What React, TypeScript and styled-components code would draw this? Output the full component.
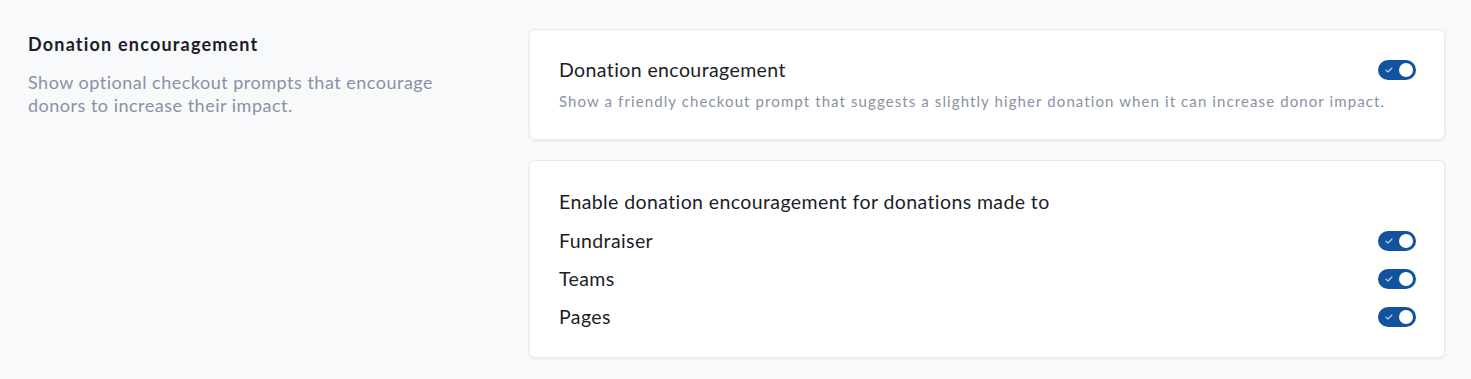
import React from "react";
import styled, { createGlobalStyle } from "styled-components";

const Global = createGlobalStyle`
  html, body { margin: 0; padding: 0; background: #f8f9fb; }
  body { font-family: Lato, "Open Sans", sans-serif; color: #1b1d29; }
`;

const Page = styled.div`
  display: grid;
  grid-template-columns: 469px 1fr;
  column-gap: 32px;
  padding: 29px 26px 20px 28px;
`;

const Intro = styled.div`
  display: flex;
  flex-direction: column;
  gap: 16px;
  padding-top: 4px;
`;

const IntroTitle = styled.h2`
  margin: 0;
  font-size: 18px;
  font-weight: 700;
  line-height: 22px;
  letter-spacing: 1.2px;
  color: #1b1d29;
`;

const IntroText = styled.p`
  margin: 0;
  font-size: 18px;
  line-height: 23px;
  letter-spacing: 0.5px;
  color: #8a91a4;
  max-width: 430px;
`;

const Cards = styled.div`
  display: flex;
  flex-direction: column;
  gap: 20px;
`;

const Card = styled.section<{ $pad: string }>`
  background: #fff;
  border: 1px solid #e8eaef;
  border-radius: 6px;
  box-shadow: 0 1px 3px rgba(20, 30, 60, 0.08);
  padding: ${(p) => p.$pad};
  display: flex;
  flex-direction: column;
`;

const Row = styled.div<{ $h?: number }>`
  display: flex;
  align-items: center;
  justify-content: space-between;
  height: ${(p) => p.$h ?? 38}px;
`;

const Label = styled.span`
  font-size: 19.5px;
  line-height: 24px;
  letter-spacing: 0.4px;
  color: #1b1d29;
`;

const Hint = styled.p`
  margin: 9px 0 0;
  font-size: 15px;
  line-height: 20px;
  color: #8a91a4;
  letter-spacing: 1.1px;
`;

const Track = styled.button`
  position: relative;
  width: 38px;
  height: 20px;
  border-radius: 10px;
  border: none;
  padding: 0;
  background: #13529d;
  cursor: pointer;
  flex-shrink: 0;
`;

const Knob = styled.span`
  position: absolute;
  top: 3px;
  right: 3px;
  width: 14px;
  height: 14px;
  border-radius: 50%;
  background: #fff;
`;

const Check = styled.svg`
  position: absolute;
  left: 7px;
  top: 7px;
`;

const Toggle = () => (
  <Track type="button" aria-pressed="true">
    <Check width="8" height="6" viewBox="0 0 8 6">
      <path d="M0.9 3.1 L2.9 5 L7 1" fill="none" stroke="#c7d3e6" strokeWidth="1.1" strokeLinecap="round" strokeLinejoin="round" />
    </Check>
    <Knob />
  </Track>
);

export default function App() {
  return (
    <>
      <Global />
      <Page>
        <Intro>
          <IntroTitle>Donation encouragement</IntroTitle>
          <IntroText>Show optional checkout prompts that encourage donors to increase their impact.</IntroText>
        </Intro>
        <Cards>
          <Card $pad="28px 28px 28px 29px">
            <Row $h={24}>
              <Label>Donation encouragement</Label>
              <Toggle />
            </Row>
            <Hint>Show a friendly checkout prompt that suggests a slightly higher donation when it can increase donor impact.</Hint>
          </Card>
          <Card $pad="20px 28px 21px 29px">
            <Row $h={41}>
              <Label>Enable donation encouragement for donations made to</Label>
            </Row>
            <Row>
              <Label>Fundraiser</Label>
              <Toggle />
            </Row>
            <Row>
              <Label>Teams</Label>
              <Toggle />
            </Row>
            <Row>
              <Label>Pages</Label>
              <Toggle />
            </Row>
          </Card>
        </Cards>
      </Page>
    </>
  );
}
